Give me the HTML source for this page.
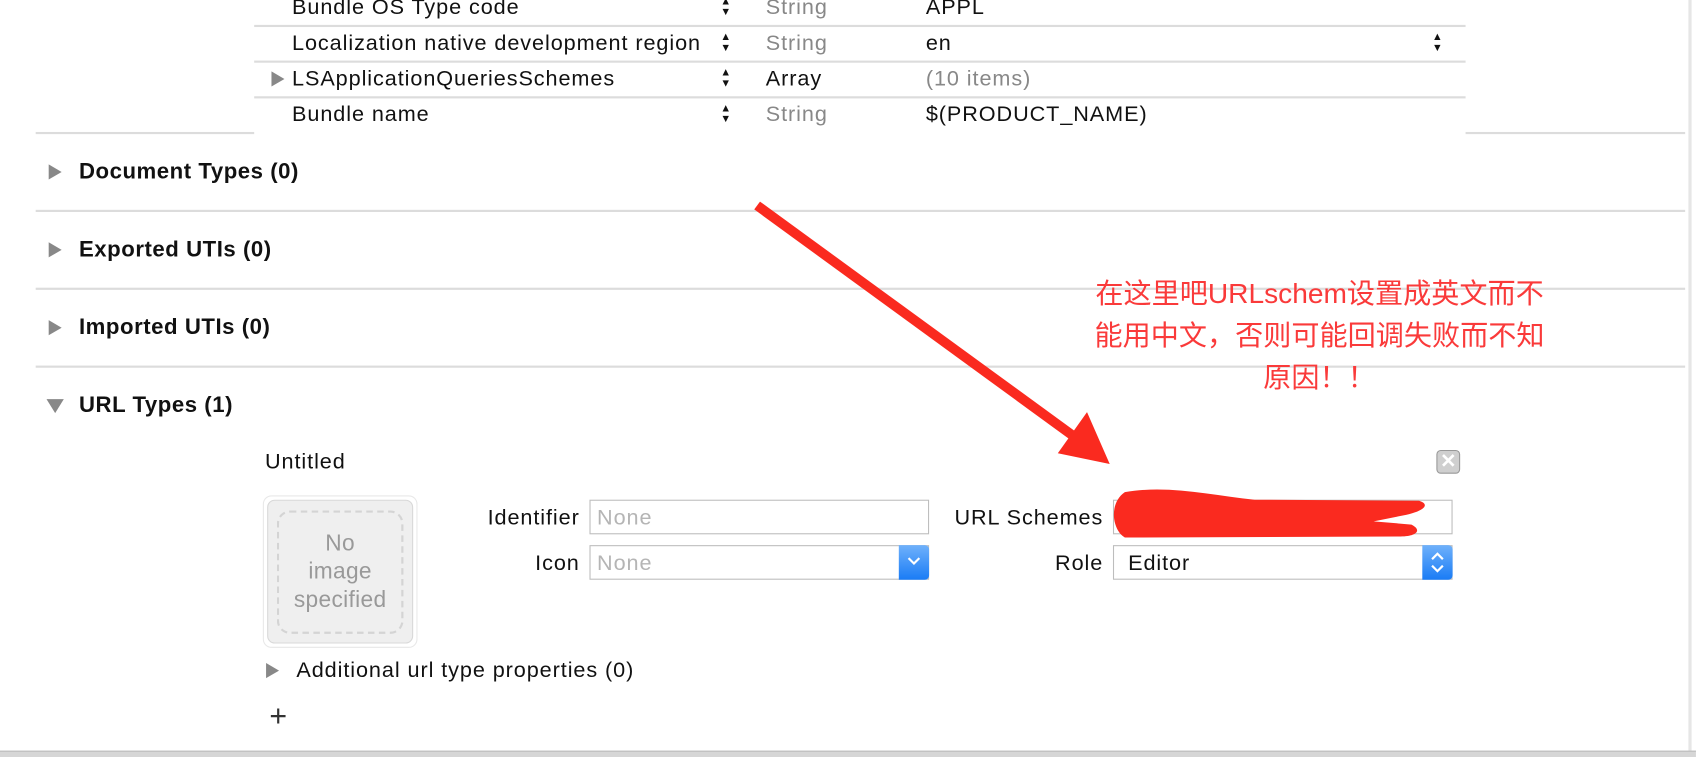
<!DOCTYPE html>
<html><head><meta charset="utf-8"><style>
html,body{margin:0;padding:0;background:#fff;overflow:hidden}
#w{position:absolute;left:0;top:0;width:1568px;height:699px;transform:scale(1.0816);transform-origin:0 0;font-family:"Helvetica Neue","Liberation Sans",Arial,sans-serif;color:#111}
.a{position:absolute;white-space:nowrap}
.t{font-size:20px;line-height:24px;letter-spacing:0.85px}
.g{color:#888}
.hl{position:absolute;height:2px;background:#dcdcdc}
.h{font-size:20.5px;font-weight:bold;line-height:24px;letter-spacing:0.5px}
.tri{position:absolute;width:0;height:0;border-top:7px solid transparent;border-bottom:7px solid transparent;border-left:12px solid #888}
.stp{position:absolute;width:8px;font-size:10px;line-height:10px;color:#111;text-align:center}
.fld{position:absolute;border:1px solid #bdbdbd;background:#fff;box-sizing:border-box}
.blue{position:absolute;top:-1px;right:-1px;bottom:-1px;width:28px;border-radius:0 4px 4px 0;background:linear-gradient(#6fb1fb,#1a7cf5)}
</style></head><body><div id="w">
<div class="hl" style="left:235px;top:23px;width:1120px"></div>
<div class="hl" style="left:235px;top:56px;width:1120px"></div>
<div class="hl" style="left:235px;top:89px;width:1120px"></div>
<div class="hl" style="left:33px;top:122px;width:202px"></div>
<div class="hl" style="left:1355px;top:122px;width:203px"></div>
<div class="a t" style="left:270px;top:-5px">Bundle OS Type code</div>
<div class="a t" style="left:270px;top:28px">Localization native development region</div>
<div class="a t" style="left:270px;top:61px">LSApplicationQueriesSchemes</div>
<div class="a t" style="left:270px;top:94px">Bundle name</div>
<div class="tri" style="left:251px;top:66px;border-left-color:#888"></div>
<div class="stp" style="left:666px;top:-3px">▲<br>▼</div>
<div class="stp" style="left:666px;top:30px">▲<br>▼</div>
<div class="stp" style="left:666px;top:63px">▲<br>▼</div>
<div class="stp" style="left:666px;top:96px">▲<br>▼</div>
<div class="stp" style="left:1324px;top:30px">▲<br>▼</div>
<div class="a t g" style="left:708px;top:-5px">String</div>
<div class="a t g" style="left:708px;top:28px">String</div>
<div class="a t" style="left:708px;top:61px">Array</div>
<div class="a t g" style="left:708px;top:94px">String</div>
<div class="a t" style="left:856px;top:-5px">APPL</div>
<div class="a t" style="left:856px;top:28px">en</div>
<div class="a t g" style="left:856px;top:61px">(10 items)</div>
<div class="a t" style="left:856px;top:94px">$(PRODUCT_NAME)</div>
<div class="tri" style="left:45px;top:152px"></div><div class="a h" style="left:73px;top:147px">Document Types (0)</div>
<div class="hl" style="left:33px;top:194px;width:1525px"></div>
<div class="tri" style="left:45px;top:224px"></div><div class="a h" style="left:73px;top:219px">Exported UTIs (0)</div>
<div class="hl" style="left:33px;top:266px;width:1525px"></div>
<div class="tri" style="left:45px;top:296px"></div><div class="a h" style="left:73px;top:291px">Imported UTIs (0)</div>
<div class="hl" style="left:33px;top:338px;width:1525px"></div>
<div style="position:absolute;left:43px;top:369px;width:0;height:0;border-left:8px solid transparent;border-right:8px solid transparent;border-top:13px solid #888"></div>
<div class="a h" style="left:73px;top:363px">URL Types (1)</div>
<div style="position:absolute;left:1561px;top:0;width:3px;height:699px;background:#e6e6e6"></div>
<div style="position:absolute;left:0;top:694px;width:1568px;height:5px;background:#d6d6d6;border-top:1px solid #bbb"></div>
<div class="a t" style="left:245px;top:415px">Untitled</div>
<div style="position:absolute;left:1328px;top:416px;width:22px;height:22px;box-sizing:border-box;border:1px solid #999;border-radius:4px;background:#cfcfcf;color:#fff;font-size:18px;line-height:19px;text-align:center;font-weight:bold">✕</div>
<div style="position:absolute;left:243px;top:458px;width:143px;height:141px;border:1px solid #e8e8e8;border-radius:8px;box-sizing:border-box;background:#fff"></div>
<div style="position:absolute;left:247px;top:462px;width:135px;height:133px;border:1px solid #d8d8d8;border-radius:7px;box-sizing:border-box;background:#efefef"></div>
<div style="position:absolute;left:256px;top:472px;width:117px;height:114px;border:2px dashed #d4d4d4;border-radius:12px;box-sizing:border-box"></div>
<div class="a" style="left:246px;top:490px;width:137px;text-align:center;color:#999;font-size:21px;line-height:26px;letter-spacing:0.3px;white-space:normal">No<br>image<br>specified</div>
<div class="a t" style="left:380px;top:467px;width:156px;text-align:right">Identifier</div>
<div class="fld" style="left:545px;top:462px;width:314px;height:32px"><span class="a t" style="left:6px;top:4px;color:#b5b5b5">None</span></div>
<div class="a t" style="left:380px;top:509px;width:156px;text-align:right">Icon</div>
<div class="fld" style="left:545px;top:504px;width:314px;height:32px"><span class="a t" style="left:6px;top:4px;color:#b5b5b5">None</span><div class="blue"><svg width="28" height="32" style="position:absolute;left:0;top:0"><path d="M9 12 L14 17 L19 12" stroke="#fff" stroke-width="2" fill="none"/></svg></div></div>
<div class="a t" style="left:840px;top:467px;width:180px;text-align:right">URL Schemes</div>
<div class="fld" style="left:1029px;top:462px;width:314px;height:32px"></div>
<div class="a t" style="left:840px;top:509px;width:180px;text-align:right">Role</div>
<div class="fld" style="left:1029px;top:504px;width:314px;height:32px"><span class="a t" style="left:13px;top:4px">Editor</span><div class="blue"><svg width="28" height="32" style="position:absolute;left:0;top:0"><path d="M9 13 L14 8 L19 13 M9 19 L14 24 L19 19" stroke="#fff" stroke-width="2" fill="none"/></svg></div></div>
<div class="tri" style="left:246px;top:613px"></div>
<div class="a t" style="left:274px;top:608px">Additional url type properties (0)</div>
<div class="a" style="left:249px;top:648px;font-size:28px;line-height:28px;color:#333;font-weight:200">+</div>
<svg width="1568" height="699" style="position:absolute;left:0;top:0">
<line x1="700" y1="190" x2="995" y2="405" stroke="#fa2a1f" stroke-width="9"/>
<polygon points="1026,429 978,419 1005,381" fill="#fa2a1f"/>
<path d="M1040 455 C1080 448 1120 458 1160 462 L1312 463 C1322 466 1318 472 1300 476 L1270 482 L1305 485 C1315 490 1310 496 1295 496 L1040 497 C1028 490 1025 465 1040 455 Z" fill="#fa2a1f"/>
</svg>
<div class="a" style="left:970px;top:252px;width:500px;text-align:center;color:#fa3a3a;font-size:26px;line-height:39px;white-space:normal;font-family:'Liberation Sans','Noto Sans CJK SC',sans-serif">在这里吧URLschem设置成英文而不<br>能用中文，否则可能回调失败而不知<br>原因！！</div>
</div></body></html>
